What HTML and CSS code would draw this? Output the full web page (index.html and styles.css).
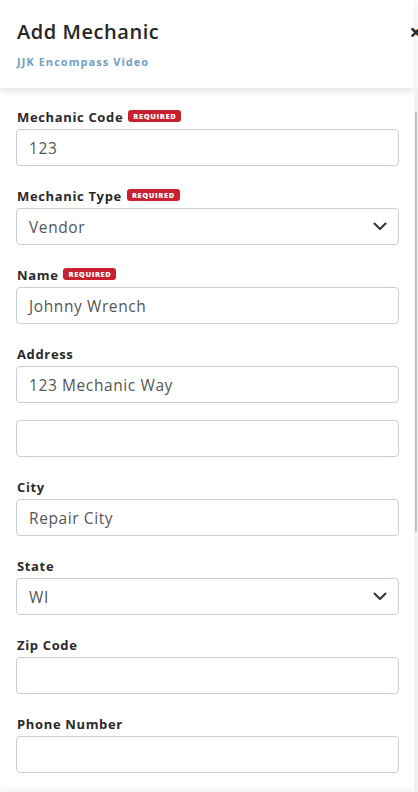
FILE: index.html
```html
<!DOCTYPE html>
<html>
<head>
<meta charset="utf-8">
<link rel="stylesheet" href="styles.css">
</head>
<body>
<div class="panel">
  <header class="head">
    <div class="head-text">
      <h1 class="title">Add Mechanic</h1>
      <div class="sub">JJK Encompass Video</div>
    </div>
    <span class="close">×</span>
  </header>
  <main class="form">
    <div class="field">
      <div class="label">Mechanic Code <span class="req">REQUIRED</span></div>
      <div class="input">123</div>
    </div>
    <div class="field">
      <div class="label">Mechanic Type <span class="req">REQUIRED</span></div>
      <div class="input select">Vendor
        <svg class="chev" width="14" height="9" viewBox="0 0 14 9"><path d="M1.5 1.5 L7 7 L12.5 1.5" fill="none" stroke="#333" stroke-width="2" stroke-linecap="round" stroke-linejoin="round"/></svg>
      </div>
    </div>
    <div class="field">
      <div class="label">Name <span class="req">REQUIRED</span></div>
      <div class="input">Johnny Wrench</div>
    </div>
    <div class="field field-tight">
      <div class="label">Address</div>
      <div class="input">123 Mechanic Way</div>
    </div>
    <div class="field">
      <div class="input"></div>
    </div>
    <div class="field">
      <div class="label">City</div>
      <div class="input">Repair City</div>
    </div>
    <div class="field">
      <div class="label">State</div>
      <div class="input select">WI
        <svg class="chev" width="14" height="9" viewBox="0 0 14 9"><path d="M1.5 1.5 L7 7 L12.5 1.5" fill="none" stroke="#333" stroke-width="2" stroke-linecap="round" stroke-linejoin="round"/></svg>
      </div>
    </div>
    <div class="field">
      <div class="label">Zip Code</div>
      <div class="input"></div>
    </div>
    <div class="field">
      <div class="label">Phone Number</div>
      <div class="input"></div>
    </div>
  </main>
  <footer class="foot"></footer>
  <div class="scrollbar"><div class="thumb"></div></div>
</div>
</body>
</html>
```
FILE: styles.css
```css
* { box-sizing: border-box; }
html, body { margin: 0; padding: 0; }
body {
  width: 418px;
  height: 792px;
  overflow: hidden;
  background: #fff;
  font-family: "Open Sans", "Liberation Sans", sans-serif;
  color: #2b2b2b;
}
.panel {
  position: relative;
  width: 418px;
  height: 792px;
  overflow: hidden;
  display: flex;
  flex-direction: column;
}
.head {
  flex: none;
  height: 88px;
  width: 414px;
  padding: 20px 0 0 17px;
  display: flex;
  justify-content: space-between;
  background: #fff;
  box-shadow: 0 3px 8px rgba(0,0,0,0.12);
  position: relative;
  z-index: 2;
}
.title {
  margin: 0;
  font-size: 20px;
  font-weight: 600;
  line-height: 24px;
  color: #262626;
  letter-spacing: 0.55px;
}
.sub {
  margin-top: 11px;
  font-size: 11px;
  font-weight: 700;
  color: #6d9fc0;
  line-height: 14px;
  letter-spacing: 1.05px;
}
.close {
  font-size: 22px;
  font-weight: 700;
  line-height: 20px;
  margin-top: 1px;
  margin-right: -8px;
  color: #222;
}
.form {
  flex: 1;
  width: 414px;
  padding: 21px 15px 0 16px;
}
.field { margin-bottom: 22px; }
.field-tight { margin-bottom: 17px; }
.label {
  display: flex;
  align-items: center;
  gap: 5px;
  height: 16px;
  margin-bottom: 4px;
  padding-left: 1px;
  margin-top: 1px;
  font-size: 13px;
  font-weight: 700;
  color: #2a2a2a;
  letter-spacing: 0.65px;
}
.field .label { margin-top: 0; }
.req {
  display: inline-block;
  background: #c8202f;
  color: #fff;
  font-size: 7.5px;
  font-weight: 800;
  line-height: 12px;
  height: 12px;
  padding: 0 5px;
  border-radius: 3px;
  letter-spacing: 0.6px;
  margin-top: -2px;
}
.input {
  height: 37px;
  border: 1px solid #c9cfd8;
  border-radius: 4px;
  padding: 0 12px;
  display: flex;
  align-items: center;
  font-size: 15.5px;
  color: #555;
  background: #fff;
  letter-spacing: 0.6px;
}
.select {
  justify-content: space-between;
  padding-right: 11px;
}
.chev { display: block; }
.foot {
  flex: none;
  height: 17px;
  width: 414px;
  background: #fafafa;
  box-shadow: 0 -4px 8px rgba(0,0,0,0.08);
  position: relative;
  z-index: 2;
}
.scrollbar {
  position: absolute;
  top: 88px;
  right: 0;
  width: 4px;
  bottom: 0;
  background: #f1f1f1;
  z-index: 3;
}
.thumb {
  margin-top: 24px;
  height: 420px;
  width: 2px;
  margin-left: 1px;
  background: #c3c3c3;
}
```
